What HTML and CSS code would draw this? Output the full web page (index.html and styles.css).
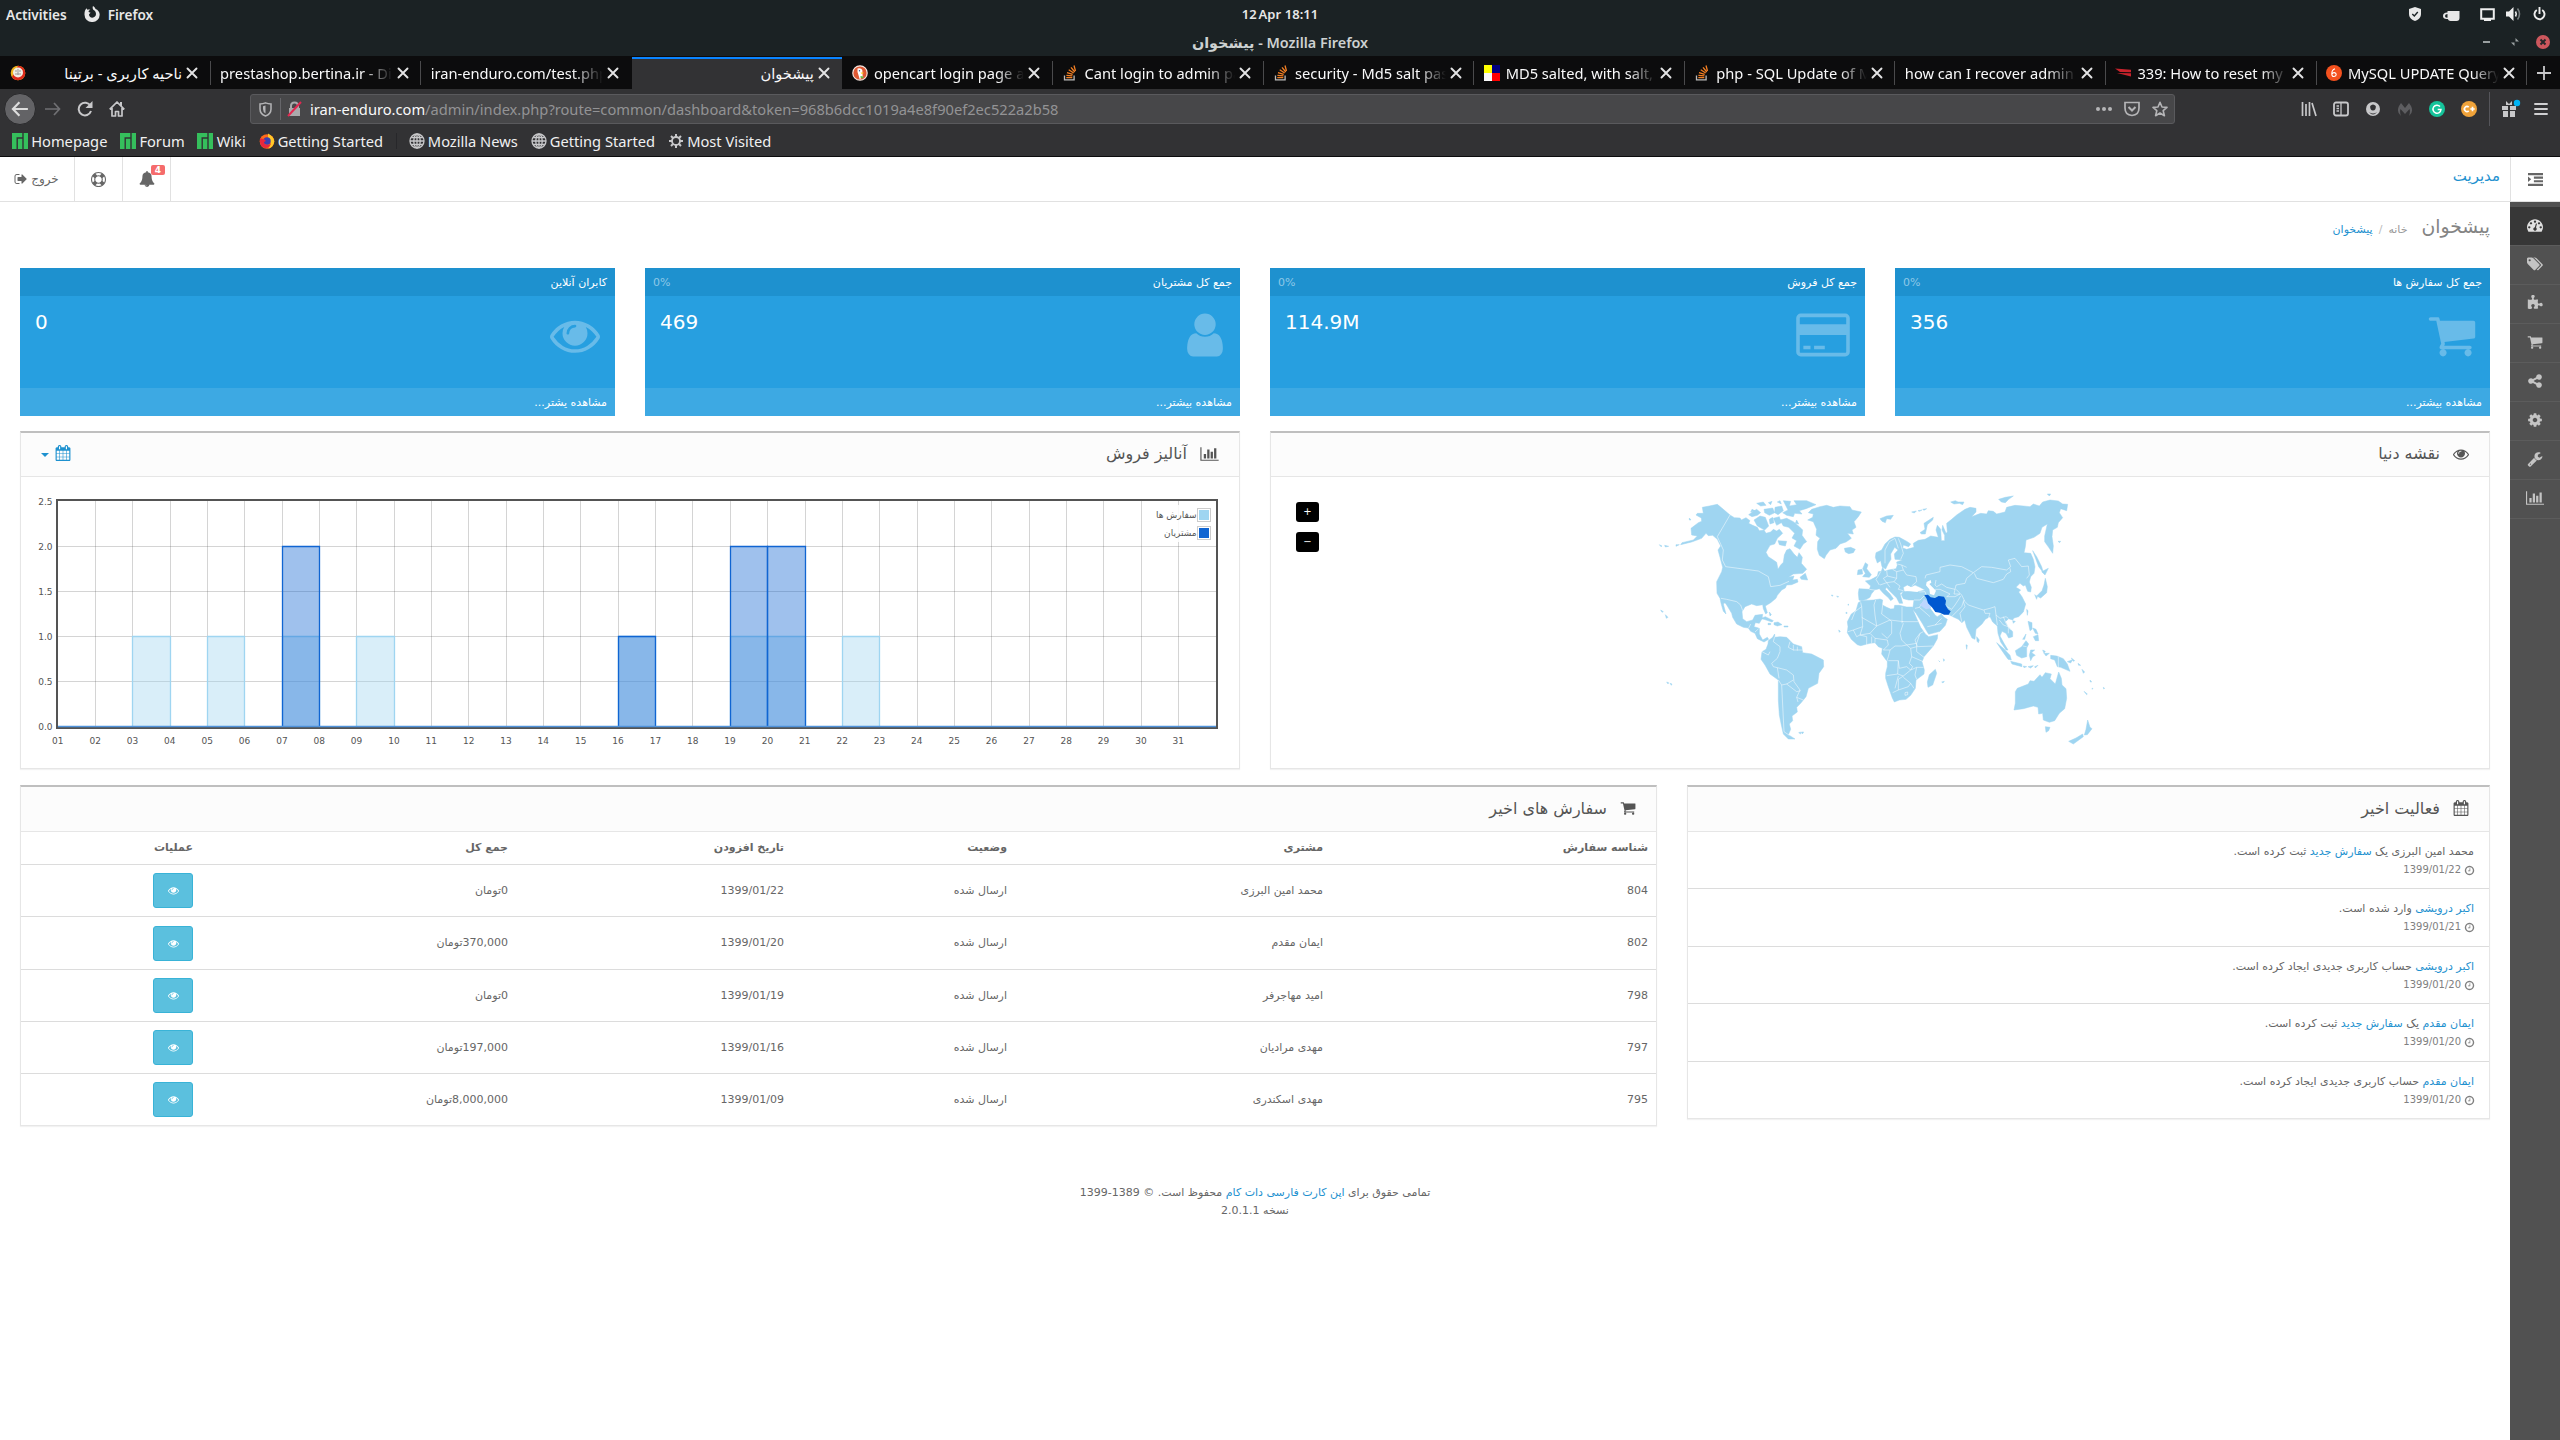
FILE: index.html
```html
<!DOCTYPE html>
<html lang="fa">
<head>
<meta charset="utf-8">
<title>پیشخوان</title>
<link rel="stylesheet" href="styles.css">
</head>
<body>
<svg class="sprite" aria-hidden="true">
  <symbol id="eye" viewBox="0 0 1792 1792"><path d="M1664 960q-152-236-381-353 61 104 61 225 0 185-131.5 316.5t-316.5 131.5-316.5-131.5-131.5-316.5q0-121 61-225-229 117-381 353 133 205 333.5 326.5t434.5 121.5 434.5-121.5 333.5-326.5zm-720-384q0-20-14-34t-34-14q-125 0-214.5 89.5t-89.5 214.5q0 20 14 34t34 14 34-14 14-34q0-86 61-147t147-61q20 0 34-14t14-34zm848 384q0 34-20 69-140 230-376.5 368.5t-499.5 138.5-499.5-139-376.5-368q-20-35-20-69t20-69q140-229 376.5-368t499.5-139 499.5 139 376.5 368q20 35 20 69z"/></symbol>
  <symbol id="cart" viewBox="0 0 1792 1792"><path d="M704 1536q0 52-38 90t-90 38-90-38-38-90 38-90 90-38 90 38 38 90zm896 0q0 52-38 90t-90 38-90-38-38-90 38-90 90-38 90 38 38 90zm128-1088v512q0 24-16.5 42.5t-40.5 21.5l-1044 122q13 60 13 70 0 16-24 64h920q26 0 45 19t19 45-19 45-45 19h-1024q-26 0-45-19t-19-45q0-11 8-31.5t16-36 21.5-40 15.5-29.5l-177-823h-204q-26 0-45-19t-19-45 19-45 45-19h256q16 0 28.5 6.5t19.5 15.5 13 24.5 8 26 5.5 29.5 4.5 26h1201q26 0 45 19t19 45z"/></symbol>
  <symbol id="user" viewBox="0 0 1792 1792"><path d="M1536 1399q0 109-62.5 187t-150.5 78h-854q-88 0-150.5-78t-62.5-187q0-85 8.5-160.5t31.5-152 58.5-131 94-89 134.5-34.5q131 128 313 128t313-128q76 0 134.5 34.5t94 89 58.5 131 31.5 152 8.5 160.5zm-256-887q0 159-112.5 271.5t-271.5 112.5-271.5-112.5-112.5-271.5 112.5-271.5 271.5-112.5 271.5 112.5 112.5 271.5z"/></symbol>
  <symbol id="card" viewBox="0 0 1920 1792"><path d="M1760 128q66 0 113 47t47 113v1216q0 66-47 113t-113 47h-1600q-66 0-113-47t-47-113v-1216q0-66 47-113t113-47h1600zm-1600 128q-13 0-22.5 9.5t-9.5 22.5v224h1664v-224q0-13-9.5-22.5t-22.5-9.5h-1600zm1600 1280q13 0 22.5-9.5t9.5-22.5v-608h-1664v608q0 13 9.5 22.5t22.5 9.5h1600zm-1504-128v-128h256v128h-256zm384 0v-128h384v128h-384z"/></symbol>
  <symbol id="bars" viewBox="0 0 2048 1792"><path d="M640 896v512h-256v-512h256zm384-512v1024h-256v-1024h256zm1024 1152v128h-2048v-1536h128v1408h1920zm-640-896v768h-256v-768h256zm384-384v1152h-256v-1152h256z"/></symbol>
  <symbol id="calendar" viewBox="0 0 1792 1792"><path d="M192 1664h288v-288h-288v288zm352 0h320v-288h-320v288zm-352-352h288v-320h-288v320zm352 0h320v-320h-320v320zm-352-384h288v-288h-288v288zm736 736h320v-288h-320v288zm-384-736h320v-288h-320v288zm768 736h288v-288h-288v288zm-384-352h320v-320h-320v320zm-352-864v-288q0-13-9.5-22.5t-22.5-9.5h-64q-13 0-22.5 9.5t-9.5 22.5v288q0 13 9.5 22.5t22.5 9.5h64q13 0 22.5-9.5t9.5-22.5zm736 864h288v-320h-288v320zm-384-384h320v-288h-320v288zm384 0h288v-288h-288v288zm32-480v-288q0-13-9.5-22.5t-22.5-9.5h-64q-13 0-22.5 9.5t-9.5 22.5v288q0 13 9.5 22.5t22.5 9.5h64q13 0 22.5-9.5t9.5-22.5zm384-64v1280q0 52-38 90t-90 38h-1408q-52 0-90-38t-38-90v-1280q0-52 38-90t90-38h128v-96q0-66 47-113t113-47h64q66 0 113 47t47 113v96h384v-96q0-66 47-113t113-47h64q66 0 113 47t47 113v96h128q52 0 90 38t38 90z"/></symbol>
  <symbol id="clock" viewBox="0 0 1792 1792"><path d="M1024 544v448q0 14-9 23t-23 9h-320q-14 0-23-9t-9-23v-64q0-14 9-23t23-9h224v-352q0-14 9-23t23-9h64q14 0 23 9t9 23zm416 352q0-148-73-273t-198-198-273-73-273 73-198 198-73 273 73 273 198 198 273 73 273-73 198-198 73-273zm224 0q0 209-103 385.5t-279.5 279.5-385.5 103-385.5-103-279.5-279.5-103-385.5 103-385.5 279.5-279.5 385.5-103 385.5 103 279.5 279.5 103 385.5z"/></symbol>
  <symbol id="gauge" viewBox="0 0 1792 1792"><path d="M384 1152q0-53-37.5-90.5t-90.5-37.5-90.5 37.5-37.5 90.5 37.5 90.5 90.5 37.5 90.5-37.5 37.5-90.5zm192-448q0-53-37.5-90.5t-90.5-37.5-90.5 37.5-37.5 90.5 37.5 90.5 90.5 37.5 90.5-37.5 37.5-90.5zm428 481l101-382q6-26-7.5-48.5t-38.5-29.5-48 6.5-30 39.5l-101 382q-60 5-107 43.5t-63 98.5q-20 77 20 146t117 89 146-20 89-117q16-60-6-117t-72-91zm660-33q0-53-37.5-90.5t-90.5-37.5-90.5 37.5-37.5 90.5 37.5 90.5 90.5 37.5 90.5-37.5 37.5-90.5zm-640-640q0-53-37.5-90.5t-90.5-37.5-90.5 37.5-37.5 90.5 37.5 90.5 90.5 37.5 90.5-37.5 37.5-90.5zm448 192q0-53-37.5-90.5t-90.5-37.5-90.5 37.5-37.5 90.5 37.5 90.5 90.5 37.5 90.5-37.5 37.5-90.5zm320 448q0 261-141 483-19 29-54 29h-1402q-35 0-54-29-141-221-141-483 0-182 71-348t191-286 286-191 348-71 348 71 286 191 191 286 71 348z"/></symbol>
  <symbol id="tags" viewBox="0 0 1920 1792"><path d="M448 448q0-53-37.5-90.5t-90.5-37.5-90.5 37.5-37.5 90.5 37.5 90.5 90.5 37.5 90.5-37.5 37.5-90.5zm1067 576q0 53-37 90l-491 492q-39 37-91 37-53 0-90-37l-715-716q-38-37-64.5-101t-26.5-117v-416q0-52 38-90t90-38h416q53 0 117 26.5t102 64.5l715 714q37 39 37 91zm384 0q0 53-37 90l-491 492q-39 37-91 37-36 0-59-14t-53-45l470-470q37-37 37-90 0-52-37-91l-715-714q-38-38-102-64.5t-117-26.5h224q53 0 117 26.5t102 64.5l715 714q37 39 37 91z"/></symbol>
  <symbol id="puzzle" viewBox="0 0 1792 1792"><path d="M1755 1083q0 81-44.5 135t-123.5 54q-41 0-77.5-17.5t-59-38-56.5-38-71-17.5q-110 0-110 124 0 39 16 115t15 115v5q-22 0-33 1-34 3-97.5 11.5t-115.5 13.5-98 5q-61 0-103-26.5t-42-83.5q0-37 17.5-71t38-56.5 38-59 17.5-77.5q0-79-54-123.5t-135-44.5q-84 0-143 45.5t-59 127.5q0 43 15 83t33.5 64.5 33.5 53 15 50.5q0 45-46 89-37 35-117 35-95 0-245-24-9-2-27.5-4t-27.5-4l-13-2q-1 0-3-1-2 0-2-1v-1024q2 1 17.5 3.5t34 5 21.5 3.5q150 24 245 24 80 0 117-35 46-44 46-89 0-22-15-50.5t-33.5-53-33.5-64.5-15-83q0-82 59-127.5t144-45.5q80 0 134 44.5t54 123.5q0 41-17.5 77.5t-38 59-38 56.5-17.5 71q0 57 42 83.5t103 26.5q64 0 180-15t163-17v2q-1 2-3.5 17.5t-5 34-3.5 21.5q-24 150-24 245 0 80 35 117 44 46 89 46 22 0 50.5-15t53-33.5 64.5-33.5 83-15q82 0 127.5 59t45.5 143z"/></symbol>
  <symbol id="share" viewBox="0 0 1792 1792"><path d="M1344 1024q133 0 226.5 93.5t93.5 226.5-93.5 226.5-226.5 93.5-226.5-93.5-93.5-226.5q0-12 2-34l-360-180q-92 86-218 86-133 0-226.5-93.5t-93.5-226.5 93.5-226.5 226.5-93.5q126 0 218 86l360-180q-2-22-2-34 0-133 93.5-226.5t226.5-93.5 226.5 93.5 93.5 226.5-93.5 226.5-226.5 93.5q-126 0-218-86l-360 180q2 22 2 34t-2 34l360 180q92-86 218-86z"/></symbol>
  <symbol id="cog" viewBox="0 0 1792 1792"><path d="M1152 896q0-106-75-181t-181-75-181 75-75 181 75 181 181 75 181-75 75-181zm512-109v222q0 12-8 23t-20 13l-185 28q-19 54-39 91 35 50 107 138 10 12 10 25t-9 23q-27 37-99 108t-94 71q-12 0-26-9l-138-108q-44 23-91 38-16 136-29 186-7 28-36 28h-222q-14 0-24.5-8.5t-11.5-21.5l-28-184q-49-16-90-37l-141 107q-10 9-25 9-14 0-25-11-126-114-165-168-7-10-7-23 0-12 8-23 15-21 51-66.5t54-70.5q-27-50-41-99l-183-27q-13-2-21-12.5t-8-23.5v-222q0-12 8-23t19-13l186-28q14-46 39-92-40-57-107-138-10-12-10-24 0-10 9-23 26-36 98.5-107.5t94.5-71.5q13 0 26 10l138 107q44-23 91-38 16-136 29-186 7-28 36-28h222q14 0 24.5 8.5t11.5 21.5l28 184q49 16 90 37l142-107q9-9 24-9 13 0 25 10 129 119 165 170 7 8 7 22 0 12-8 23-15 21-51 66.5t-54 70.5q26 50 41 98l183 28q13 2 21 12.5t8 23.5z"/></symbol>
  <symbol id="wrench" viewBox="0 0 1792 1792"><path d="M448 1472q0-26-19-45t-45-19-45 19-19 45 19 45 45 19 45-19 19-45zm644-420l-682 682q-37 37-90 37-52 0-91-37l-106-108q-38-36-38-90 0-53 38-91l681-681q39 98 114.5 173.5t173.5 114.5zm634-435q0 39-23 106-47 134-164.5 217.5t-258.5 83.5q-185 0-316.5-131.5t-131.5-316.5 131.5-316.5 316.5-131.5q58 0 121.5 16.5t107.5 46.5q16 11 16 28t-16 28l-293 169v224l193 107q5-3 79-48.5t135.5-81 70.5-35.5q15 0 23.5 10t8.5 25z"/></symbol>
  <symbol id="bell" viewBox="0 0 1792 1792"><path d="M912 1696q0-16-16-16-59 0-101.5-42.5t-42.5-101.5q0-16-16-16t-16 16q0 73 51.5 124.5t124.5 51.5q16 0 16-16zm816-288q0 52-38 90t-90 38h-448q0 106-75 181t-181 75-181-75-75-181h-448q-52 0-90-38t-38-90q50-42 91-88t85-119.5 74.5-158.5 50-206 19.5-260q0-152 117-282.5t307-158.5q-8-19-8-39 0-40 28-68t68-28 68 28 28 68q0 20-8 39 190 28 307 158.5t117 282.5q0 139 19.5 260t50 206 74.5 158.5 85 119.5 91 88z"/></symbol>
  <symbol id="signout" viewBox="0 0 1664 1792"><path d="M704 1440q0 4 1 20t.5 26.5-3 23.5-10 19.5-20.5 6.5h-320q-119 0-203.5-84.5t-84.5-203.5v-704q0-119 84.5-203.5t203.5-84.5h320q13 0 22.5 9.5t9.5 22.5q0 4 1 20t.5 26.5-3 23.5-10 19.5-20.5 6.5h-320q-66 0-113 47t-47 113v704q0 66 47 113t113 47h312l11.5 1 11.5 3 8 5.5 7 9 2 13.5zm928-544q0 26-19 45l-544 544q-19 19-45 19t-45-19-19-45v-288h-448q-26 0-45-19t-19-45v-384q0-26 19-45t45-19h448v-288q0-26 19-45t45-19 45 19l544 544q19 19 19 45z"/></symbol>
  <symbol id="ring" viewBox="0 0 1792 1792"><path d="M896 0q182 0 348 71t286 191 191 286 71 348-71 348-191 286-286 191-348 71-348-71-286-191-191-286-71-348 71-348 191-286 286-191 348-71zm0 128q-190 0-361 90l194 194q82-28 167-28t167 28l194-194q-171-90-361-90zm-678 1129l194-194q-28-82-28-167t28-167l-194-194q-90 171-90 361t90 361zm678 407q190 0 361-90l-194-194q-82 28-167 28t-167-28l-194 194q171 90 361 90zm0-384q159 0 271.5-112.5t112.5-271.5-112.5-271.5-271.5-112.5-271.5 112.5-112.5 271.5 112.5 271.5 271.5 112.5zm484-217l194 194q90-171 90-361t-90-361l-194 194q28 82 28 167t-28 167z"/></symbol>
  <symbol id="indent" viewBox="0 0 14 14"><path d="M0 1h14v2H0zM5.500 4.200h8.500v2H5.500zM5.500 7.600h8.500v2H5.500zM0 11h14v2H0zM0 4.200l3 2.600-3 2.600z"/></symbol>
  <symbol id="close" viewBox="0 0 16 16"><path d="M3.500 3.500l9 9M12.500 3.500l-9 9" fill="none" stroke="currentColor" stroke-width="1.900" stroke-linecap="round"/></symbol>
  <symbol id="globe" viewBox="0 0 16 16"><g fill="none" stroke="currentColor" stroke-width="1.300"><circle cx="8" cy="8" r="7"/><ellipse cx="8" cy="8" rx="3.200" ry="7"/><path d="M8 1v14M1 8h14M2.200 4.500h11.600M2.200 11.500h11.600"/></g></symbol>
  <symbol id="manjaro" viewBox="0 0 16 16"><path fill="#35bf5c" d="M0 0h10.300v4.300H4.500V16H0zM5.900 5.800h4.400V16H5.900zM11.700 0H16v16h-4.300z"/></symbol>
  <symbol id="stack" viewBox="0 0 16 16"><path d="M2.500 10.500v4.300h9.600v-4.300" fill="none" stroke="#bcbbbb" stroke-width="1.300"/><path d="M4.300 12.700h6M4.400 10.300l6 .6M5 7.600l5.700 1.800M6.700 4.800l5 3.200M9 2.300l3.800 4.700M12 .5l1.500 5.500" stroke="#f48024" stroke-width="1.300" fill="none"/></symbol>
</svg>

<div class="gnome" lang="en">
  <div class="gnome-left"><span>Activities</span>
    <svg width="16" height="16" viewBox="0 0 16 16"><path fill="#e8e8e8" d="M9 0c1.500 1 2.300 2 2.500 3 2.500.800 4.200 3 4.200 5.800A7.300 7.300 0 0 1 8 16 7.300 7.300 0 0 1 .500 8.800C.400 6 1 4 2.500 2.300l.800 1.500c1-.5 2-.4 3 0-1.300.5-1.800 1.300-1.700 2.200l2 .7-1.600 1.600c0 2 1.500 3.400 3.300 3.400 2.200 0 3.700-1.600 3.700-3.600C12 6 11 4.500 9.300 3.700 8.500 2.500 8.500 1.200 9 0z"/></svg>
    <span>Firefox</span></div>
  <div class="gnome-clock">12 Apr&nbsp; 18:11</div>
  <div class="tray">
    <svg width="12" height="14" viewBox="0 0 12 14"><path fill="#e8e8e8" d="M6 0l6 2v5c0 3.500-2.800 6-6 7C2.800 13 0 10.500 0 7V2z"/><path d="M3.300 7l2 2 3.500-4" fill="none" stroke="#1b2224" stroke-width="1.400"/></svg>
    <svg class="cup" width="17" height="12" viewBox="0 0 17 12"><path fill="#e8e8e8" d="M4.500 1h12v7q0 3-3 3h-6q-2 0-2.700-2Q0 9.500 0 6q0-3.600 4.500-3.500zM4.500 4Q2 4 2 6t2.500 1.700z"/></svg>
    <svg class="screen" width="15" height="13" viewBox="0 0 15 13"><path d="M1.200 1.200h12.600v9.600h-12.600z" fill="none" stroke="#eee" stroke-width="2"/><path fill="#eee" d="M4 10h7v3H4z"/></svg>
    <svg class="vol" width="16" height="14" viewBox="0 0 16 14"><path fill="#eee" d="M0 4.500h3L7.500 0v14L3 9.500H0z"/><path d="M9.500 4.500q1.500 2.500 0 5" fill="none" stroke="#eee" stroke-width="1.600"/><path d="M11.500 1.500q4 5.500 0 11" fill="none" stroke="#777d7f" stroke-width="1.600"/></svg>
    <svg class="power" width="13" height="14" viewBox="0 0 13 14"><path d="M3.800 3a5 5 0 1 0 5.400 0M6.500 0v7" fill="none" stroke="#eee" stroke-width="1.900"/></svg>
  </div>
</div>
<div class="titlebar"><span></span><b><bdi>پیشخوان</bdi> - Mozilla Firefox</b>
  <div class="winctl">
    <svg width="7" height="3"><path fill="#9aa0a1" d="M0 0h7v2H0z"/></svg>
    <svg width="8" height="8" viewBox="0 0 8 8"><path fill="#9aa0a1" d="M4.500 0v3.500H8zM3.500 8V4.500H0z"/></svg>
    <svg width="14" height="14" viewBox="0 0 14 14"><circle cx="7" cy="7" r="7" fill="#cc575d"/><path d="M4.500 4.500l5 5M9.500 4.500l-5 5" stroke="#26282b" stroke-width="2"/></svg>
  </div>
</div>

<div class="tabs">
  <div class="tab"><svg class="fav" width="16" height="16" viewBox="0 0 16 16"><circle cx="8" cy="8" r="7.300" fill="#f0b41c"/><path d="M8 .7A7.300 7.300 0 0 1 8 15.300 7.300 7.300 0 0 1 2 12z" fill="#dd2a1b"/><circle cx="8" cy="7.500" r="5" fill="#f1eee4"/><path d="M5 6h2M9 6h2M5 9h6M8 4v6" stroke="#999"/></svg><span class="t fa" dir="rtl">ناحیه کاربری - برتینا</span><svg class="x"><use href="#close"/></svg></div>
  <div class="tab"><span class="t">prestashop.bertina.ir - Di</span><svg class="x"><use href="#close"/></svg></div>
  <div class="tab"><span class="t">iran-enduro.com/test.php</span><svg class="x"><use href="#close"/></svg></div>
  <div class="tab active"><span class="t fa" dir="rtl">پیشخوان</span><svg class="x"><use href="#close"/></svg></div>
  <div class="tab"><svg class="fav" width="16" height="16" viewBox="0 0 16 16"><circle cx="8" cy="8" r="7.200" fill="#de5833" stroke="#f5e6e0" stroke-width="1.200"/><path d="M5.500 3.500Q9 2.500 10.300 5l.4 7-3 2.200Q6.500 10 5.500 7z" fill="#fff"/><path d="M8.500 7.500l3.800.3-2.500 1.300z" fill="#fdd20a"/><path d="M8.500 11l3 .5-.5 2-2.500-.8z" fill="#65bc46"/><circle cx="7.500" cy="5.800" r=".7" fill="#2d4f8e"/></svg><span class="t">opencart login page ad</span><svg class="x"><use href="#close"/></svg></div>
  <div class="tab"><svg class="fav"><use href="#stack"/></svg><span class="t">Cant login to admin pa</span><svg class="x"><use href="#close"/></svg></div>
  <div class="tab"><svg class="fav"><use href="#stack"/></svg><span class="t">security - Md5 salt pass</span><svg class="x"><use href="#close"/></svg></div>
  <div class="tab"><svg class="fav" width="16" height="16" viewBox="0 0 16 16"><path fill="#ff0" d="M0 0h8v8H0z"/><path fill="#00007f" d="M8 0h8v8H8z"/><path d="M0 8h8v8H0z"/><path fill="red" d="M8 8h8v8H8z"/></svg><span class="t">MD5 salted, with salt,</span><svg class="x"><use href="#close"/></svg></div>
  <div class="tab"><svg class="fav"><use href="#stack"/></svg><span class="t">php - SQL Update of M</span><svg class="x"><use href="#close"/></svg></div>
  <div class="tab"><span class="t">how can I recover admin</span><svg class="x"><use href="#close"/></svg></div>
  <div class="tab"><svg class="fav" width="16" height="16" viewBox="0 0 16 16"><path fill="#c8232c" d="M0 3.500l16 1.300v2.400L5 7zM2 8l14 .300v3.200z"/></svg><span class="t">339: How to reset my</span><svg class="x"><use href="#close"/></svg></div>
  <div class="tab"><svg class="fav" width="16" height="16" viewBox="0 0 16 16"><circle cx="8" cy="8" r="8" fill="#f4511e"/><path d="M9 3.800Q5.800 5 5.800 8.400T8 11.500t2.200-2T8.300 7.600 6.800 9" fill="none" stroke="#fff" stroke-width="1.100"/></svg><span class="t">MySQL UPDATE Query</span><svg class="x"><use href="#close"/></svg></div>
  <svg class="plus" width="16" height="16" viewBox="0 0 16 16"><path d="M8 1v14M1 8h14" stroke="#c8c8ca" stroke-width="1.800"/></svg>
</div>

<div class="nav">
  <span class="back"><svg width="18" height="18" viewBox="0 0 16 16"><path d="M15 8H2M7.500 2L1.700 8l5.800 6" fill="none" stroke="#ddd" stroke-width="1.900"/></svg></span>
  <svg class="fwd" width="16" height="16" viewBox="0 0 16 16"><path d="M0 8h14M9 2l5.500 6L9 14" fill="none" stroke="#707073" stroke-width="1.700"/></svg>
  <svg class="reload" width="16" height="16" viewBox="0 0 16 16"><path d="M13.500 5A6.300 6.300 0 1 0 14 10" fill="none" stroke="#c8c8ca" stroke-width="2"/><path fill="#c8c8ca" d="M15.500 0v7h-7z"/></svg>
  <svg class="home" width="16" height="16" viewBox="0 0 16 16"><path d="M.7 8.300L8 1l7.300 7.300M3 7v8h3.500v-4.500h3V15H13V7" fill="none" stroke="#c8c8ca" stroke-width="1.700" stroke-linejoin="round"/><path fill="#c8c8ca" d="M11 1h2v4h-2z"/></svg>
  <div class="url">
    <svg width="13" height="15" viewBox="0 0 13 15"><path d="M6.500.900Q9 2 12 2v5q0 5-5.500 7Q1 12 1 7V2q3 0 5.500-1.100z" fill="none" stroke="#b5b5b7" stroke-width="1.500"/><path fill="#b5b5b7" d="M6.500 3.500v8Q4 10 4 7V4.200z"/></svg>
    <i></i>
    <svg width="15" height="16" viewBox="0 0 15 16"><path fill="#a9a9ab" d="M2 7h11v8H2z"/><path d="M4 8V5q0-3.500 3.500-3.500T11 5v3" fill="none" stroke="#a9a9ab" stroke-width="2"/><path d="M1 15L14 1" stroke="#e22850" stroke-width="2"/></svg>
    <span class="addr"><b>iran-enduro.com</b>/admin/index.php?route=common/dashboard&amp;token=968b6dcc1019a4e8f90ef2ec522a2b58</span>
    <svg width="16" height="16" viewBox="0 0 16 16"><g fill="#b5b5b7"><circle cx="2" cy="8" r="2"/><circle cx="8" cy="8" r="2"/><circle cx="14" cy="8" r="2"/></g></svg>
    <svg width="16" height="16" viewBox="0 0 16 16"><path d="M1 1.500h14V7q0 7-7 7.500Q1 14 1 7z" fill="none" stroke="#b5b5b7" stroke-width="1.700"/><path d="M4.500 6L8 9.500 11.500 6" fill="none" stroke="#b5b5b7" stroke-width="2"/></svg>
    <svg width="16" height="16" viewBox="0 0 16 16"><path d="M8 1.300l2 4.700 5 .4-3.800 3.300 1.200 5L8 12l-4.400 2.700 1.200-5L1 6.400 6 6z" fill="none" stroke="#b5b5b7" stroke-width="1.600" stroke-linejoin="round"/></svg>
  </div>
  <div class="ext">
    <svg width="16" height="16" viewBox="0 0 16 16"><path d="M1.500 1v14M5 3v12M8.500 1v14M11 2l4 13" stroke="#c8c8ca" stroke-width="1.700"/></svg>
    <svg width="16" height="16" viewBox="0 0 16 16"><rect x="1" y="1.500" width="14" height="13" rx="2" fill="none" stroke="#c8c8ca" stroke-width="1.800"/><path d="M8 2v12M3.500 5h2.500M3.500 7.500h2.500M3.500 10h2.500" stroke="#c8c8ca" stroke-width="1.300"/></svg>
    <svg width="16" height="16" viewBox="0 0 16 16"><circle cx="8" cy="8" r="7" fill="#c8c8ca"/><path d="M5.200 5Q8 2 10.800 5q.4 4.200-2.800 4.600Q4.800 9.200 5.200 5zM4 11q4 3 8 0-4 5-8 0z" fill="#323234"/></svg>
    <svg width="16" height="16" viewBox="0 0 16 16"><path fill="#5d5d60" d="M4 15Q-1 11 2 5l2-3 4 5 4-5 2 3q3 6-2 10 1.500-4 .5-7L8 13 3.500 8q-1 3 .5 7z"/></svg>
    <svg width="16" height="16" viewBox="0 0 16 16"><circle cx="8" cy="8" r="8" fill="#15c39a"/><path d="M11 5.500A4 4 0 1 0 12 8.500H8.700" fill="none" stroke="#fff" stroke-width="1.500"/></svg>
    <svg width="16" height="16" viewBox="0 0 16 16"><circle cx="8" cy="8" r="8" fill="#f0a33a"/><path d="M7.700 6.200a2.500 2.500 0 1 0 0 3.600M9.300 8h4.400M11.500 5.800v4.400" fill="none" stroke="#fff" stroke-width="1.700"/></svg>
    <i></i>
    <svg class="gift" width="20" height="20" viewBox="0 0 20 20"><path fill="#c8c8ca" d="M0 7h6v4H0zM8 7h6v4H8zM1 12h5v6H1zM8 12h5v6H8zM4 2l3 3 3-3v4H4z"/><circle cx="15" cy="4" r="3.200" fill="#00b3f4"/></svg>
    <svg class="menu" width="14" height="16" viewBox="0 0 14 16"><path d="M1 3h12M1 8h12M1 13h12" stroke="#d0d0d2" stroke-width="1.900" stroke-linecap="round"/></svg>
  </div>
</div>

<div class="bookmarks">
  <span><svg><use href="#manjaro"/></svg>Homepage</span>
  <span><svg><use href="#manjaro"/></svg>Forum</span>
  <span><svg><use href="#manjaro"/></svg>Wiki</span>
  <span><svg viewBox="0 0 16 16"><circle cx="8" cy="8.500" r="7.300" fill="#ff6a1a"/><path d="M9 .5q6 3 6.300 8-1 6-6 7.300Q14 9 9 5z" fill="#ffc928"/><circle cx="8" cy="8" r="3.700" fill="#3b3fae"/><path d="M1 5q2 1 4 1l2 2-2 1q0 3 4 3 2 0 3-2-1 5-6 5Q0 14 1 5z" fill="#e8283c"/></svg>Getting Started</span>
  <i></i>
  <span><svg><use href="#globe"/></svg>Mozilla News</span>
  <span><svg><use href="#globe"/></svg>Getting Started</span>
  <span><svg viewBox="0 0 16 16"><g fill="none" stroke="#c8c8ca"><circle cx="8" cy="8" r="4" stroke-width="1.800"/><path stroke-width="2" d="M8 1v3M8 12v3M1 8h3M12 8h3M3 3l2.200 2.200M10.800 10.800L13 13M13 3l-2.200 2.200M5.200 10.800L3 13"/></g></svg>Most Visited</span>
</div>

<div class="page" dir="rtl">
  <header>
    <a class="toggle"><svg width="15" height="15"><use href="#indent"/></svg></a>
    <a class="brand">مدیریت</a>
    <a class="hbtn"><svg width="16" height="16"><use href="#bell"/></svg><em>4</em></a>
    <a class="hbtn"><svg width="15" height="15"><use href="#ring"/></svg></a>
    <a class="hbtn out">خروج <svg width="13" height="14"><use href="#signout"/></svg></a>
  </header>
  <div class="cols">
    <aside>
      <a class="on"><svg><use href="#gauge"/></svg></a>
      <a><svg><use href="#tags"/></svg></a>
      <a><svg><use href="#puzzle"/></svg></a>
      <a><svg><use href="#cart"/></svg></a>
      <a><svg><use href="#share"/></svg></a>
      <a><svg><use href="#cog"/></svg></a>
      <a><svg><use href="#wrench"/></svg></a>
      <a><svg class="wide"><use href="#bars"/></svg></a>
    </aside>
    <main>
      <div class="crumb"><h1>پیشخوان</h1><span>خانه</span><i>/</i><a>پیشخوان</a></div>
      <div class="tiles">
        <div class="tile"><div class="th"><span>جمع کل سفارش ها</span><span class="pct" dir="ltr">0%</span></div><div class="tb crt"><svg width="50" height="50"><use href="#cart"/></svg><b>356</b></div><div class="tf">مشاهده بیشتر...</div></div>
        <div class="tile"><div class="th"><span>جمع کل فروش</span><span class="pct" dir="ltr">0%</span></div><div class="tb"><svg width="54" height="50"><use href="#card"/></svg><b dir="ltr">114.9M</b></div><div class="tf">مشاهده بیشتر...</div></div>
        <div class="tile"><div class="th"><span>جمع کل مشتریان</span><span class="pct" dir="ltr">0%</span></div><div class="tb usr"><svg width="50" height="50"><use href="#user"/></svg><b>469</b></div><div class="tf">مشاهده بیشتر...</div></div>
        <div class="tile"><div class="th"><span>کابران آنلاین</span></div><div class="tb"><svg width="50" height="50"><use href="#eye"/></svg><b>0</b></div><div class="tf">مشاهده یشتر...</div></div>
      </div>
      <div class="row two">
        <section class="panel">
          <h3><svg width="16" height="16"><use href="#eye"/></svg>نقشه دنیا</h3>
          <div class="map">
            <div class="zoom"><b>+</b><b>−</b></div>
            <svg class="world" width="480" height="270" viewBox="0 30 1440 810">
              <g class="land">
                <path d="M187 112L208 108 232 103 250 118 270 135 283 143 300 144 304 150 318 143 330 152 326 160 338 166 352 172 358 182 372 180 378 190 392 186 400 178 410 183 418 178 428 190 412 205 404 222 390 226 378 247 385 260 400 270 410 277 414 298 422 285 430 277 433 255 440 240 450 236 462 252 472 262 477 248 487 262 484 280 500 298 488 310 460 312 445 322 462 318 458 330 472 328 474 336 455 344 440 345 436 354 425 360 412 376 408 385 392 398 376 408 382 428 377 432 370 416 368 404 350 407 335 402 315 410 306 425 308 446 320 455 338 450 345 436 368 433 366 446 358 460 346 458 342 470 358 475 358 492 368 510 382 502 386 508 372 516 352 506 345 490 332 484 325 474 310 472 290 462 278 442 275 430 262 408 255 398 250 402 258 432 250 424 243 400 240 385 231 370 230 335 245 305 248 292 240 262 234 240 242 228 232 208 218 196 205 197 198 190 185 205 155 216 122 224 126 218 160 210 172 198 155 195 153 175 175 158 185 154 184 144 168 135 172 130 190 130z"/>
                <path d="M338 125L350 118 362 128 352 136 336 140 326 134zM342 150L360 138 376 142 386 168 374 180 352 168zM350 100L370 96 378 106 362 108zM372 118L398 114 404 128 388 136 374 128zM385 98L396 94 392 104zM405 112L425 108 430 122 414 134 404 128zM412 96L420 92 424 102zM388 148L398 142 402 158 390 162zM400 145L418 140 424 158 410 166zM420 150L440 145 460 155 478 170 488 180 486 196 500 215 490 222 480 238 462 228 470 212 456 204 464 190 446 172 430 168zM414 212L440 214 436 228 418 224zM430 92L452 94 448 108 470 104 462 92 500 92 528 104 498 116 478 122 486 132 464 130 460 140 440 136 428 128 444 120zM470 150L476 162 466 160zM336 118L345 122 332 126zM480 322L496 310 503 330 484 328z"/>
                <path d="M505 128L515 118 540 110 560 106 580 112 600 108 630 110 636 120 664 126 655 140 642 155 648 172 636 180 640 192 622 190 634 205 618 216 600 222 588 235 570 240 558 256 553 266 538 256 532 238 533 215 540 205 528 196 530 178 520 155 503 150 518 142 520 132z"/>
                <path d="M613 235L632 232 646 238 640 248 626 251 616 246zM360 446L376 440 400 452 396 456 372 448zM402 458L414 456 426 464 412 468 402 464zM432 468h12v3h-12zM384 460h8v4h-8zM388 426l6 8-4 4zM62 420l8 5-4 2zM76 434l8 8-5 3zM80 636l6 2-2 4zM90 640l6 2-2 4zM58 224l8 4-3 2zM74 226l12 3-10 2zM108 224l10 0-10 5zM148 144l5 6-5 0z"/>
                <path d="M385 512L398 502 404 492 404 502 420 500 440 502 452 514 460 522 485 530 488 548 515 552 550 570 551 590 537 610 533 640 505 655 498 680 482 700 470 712 472 726 456 738 458 752 448 762 452 778 445 794 465 807 445 807 430 792 424 765 418 735 415 690 415 630 390 612 375 585 363 568 366 545 378 538 384 522zM476 788l6-2 0 6zM484 786l7 0-4 6z"/>
                <path d="M655 398L665 392 700 390 720 387 728 390 726 404 740 412 752 417 762 416 764 406 778 406 800 411 818 411 820 422 832 450 842 472 856 492 866 500 893 494 892 506 880 528 852 560 846 575 853 600 852 612 828 630 826 655 812 676 798 688 778 690 763 696 757 684 745 650 737 625 737 610 742 590 742 575 725 552 727 535 715 530 705 518 690 520 662 527 652 524 634 508 622 488 624 470 622 455 634 432 648 422z"/>
                <path d="M886 598L890 610 878 645 864 652 862 636 868 614zM905 636l8-2-4 5zM910 566l4 4-3 4zM896 572l4 4zM978 524l4 2-2 12zM624 402l3 2-3 2zM596 480l5 4-3 3zM574 375l5 1-2 3zM590 378l6 2-3 2zM618 426l4 3-4 2z"/>
                <path d="M657 390L655 370 657 356 688 358 692 348 676 333 690 330 700 325 712 318 715 305 724 304 728 292 734 304 745 300 768 296 772 286 770 276 788 270 765 268 763 252 774 240 764 232 752 252 753 268 744 282 737 297 726 290 722 272 712 279 706 262 708 248 725 240 735 222 750 208 765 201 778 202 802 215 812 222 806 230 790 225 788 234 800 238 822 232 820 220 835 211 855 208 872 198 895 202 888 180 892 166 902 178 904 212 914 212 914 196 906 180 908 166 918 190 922 186 920 160 935 148 950 135 975 118 990 112 1008 115 1008 126 995 140 1022 130 1040 132 1045 122 1060 124 1070 132 1095 126 1100 112 1125 106 1150 108 1170 110 1180 102 1198 108 1208 96 1230 90 1255 93 1268 102 1283 103 1280 122 1262 116 1258 128 1268 143 1255 158 1252 172 1238 180 1236 200 1240 228 1238 250 1226 232 1214 215 1214 198 1222 162 1206 172 1200 190 1182 202 1158 210 1156 230 1152 248 1172 250 1180 268 1185 290 1182 310 1172 320 1168 336 1174 352 1172 366 1163 364 1156 345 1150 348 1140 340 1128 352 1142 360 1136 366 1146 380 1157 402 1150 426 1136 440 1122 444 1118 450 1106 446 1096 455 1104 470 1118 485 1118 500 1106 504 1098 490 1086 484 1080 498 1092 520 1104 540 1098 540 1082 516 1074 490 1072 468 1058 456 1050 440 1036 448 1026 462 1008 478 1005 508 996 504 980 472 974 450 966 458 955 448 942 442 924 433 900 428 884 416 872 408 868 412 886 436 892 440 904 432 912 442 922 448 916 466 900 484 866 493 858 480 848 462 828 430 818 418 822 390 806 390 790 386 784 374 790 364 800 364 830 366 855 360 840 352 825 345 812 352 802 345 790 352 792 362 780 370 788 400 778 400 770 384 758 372 748 362 740 352 736 358 750 372 760 386 752 392 746 384 730 370 718 356 704 360 694 372 690 382 680 388 664 392z"/>
                <path d="M676 278L684 284 680 296 694 314 688 322 668 320 676 310 668 296zM654 300L666 298 668 312 652 314zM720 146L740 138 760 136 752 148 740 146 736 158 726 154zM815 126l14-3-6 6zM834 122l12-2-8 4zM848 118l12-2-8 5zM840 188L855 178 852 160 880 142 878 150 862 164 856 192 845 192zM932 96l14-4 8 4 18 0-4 8-10-4-16 2zM1076 88l20-6 24-4-14 10-10 10-12-2zM1222 72l10 0-4 6zM1205 305L1225 295 1215 315zM1178 242L1190 260 1205 290 1210 308 1196 290zM1216 325L1222 350 1220 368 1202 384 1190 378 1206 362 1212 345zM1184 374l8 6-2 8zM1160 418l4 4-2 14zM1118 452l8 2-6 6zM1010 500L1018 510 1015 518 1011 514zM1254 214l8 0-3 4z"/>
                <path d="M1070 518L1090 535 1110 556 1114 570 1104 568 1088 545zM1112 574L1145 582 1146 590 1116 582zM1150 588l10 2-8 3zM1164 590l16-3-8 7zM1184 590l10-4-8 8zM1126 542L1145 530 1158 512 1166 522 1160 534 1160 560 1145 564 1130 556zM1172 540L1184 540 1175 548 1186 556 1178 560 1172 572 1168 556zM1164 454L1176 458 1176 478 1170 482zM1178 474l10 4 6 14-8-2zM1180 500L1194 494 1196 512 1186 512zM1148 508l10-16-4 16zM1208 540l8 4-4 6zM1212 550l16 0-10 8zM1232 556L1250 558 1270 566 1282 582 1290 604 1276 598 1262 592 1252 590 1244 570 1232 566zM1282 575l16-6-6 10zM1294 564l10 8-4 2zM1314 580l8 6-6 0zM1326 598l8 8-4 4zM1350 630l5 6-4 0zM1356 654l3 2-2 2zM1390 652l4 3-3 2zM1332 664l10 8-2 2z"/>
                <path d="M1126 665L1132 655 1165 642 1170 632 1182 634 1200 614 1206 622 1216 608 1234 612 1230 626 1246 642 1256 606 1264 625 1266 645 1278 656 1280 685 1274 716 1258 730 1244 752 1228 757 1210 750 1208 730 1196 732 1194 712 1180 708 1150 716 1122 720 1126 700zM1216 770L1230 772 1226 782 1218 787zM1343 750L1350 772 1356 776 1342 794 1333 795 1338 778zM1328 792L1330 800 1300 822 1286 814 1308 804z"/>
              </g>
              <path class="sea" d="M796 353L806 348 814 352 826 348 838 358 834 365 806 362 796 364zM860 336L872 330 874 338 868 342 888 362 882 376 870 372 868 358 858 346z"/>
              <path class="lines" d="M270 135L232 200 250 240 247 270 257 290M257 290L355 303 385 320 392 350 420 346 447 334M243 385L260 388 290 395 302 405 308 422M326 474L332 462M345 486L356 476M404 500L400 515 420 530 420 545 412 565 395 580 400 590 412 593 440 600 460 615 462 635 480 660 470 682 490 690M366 545L385 555 390 545M415 630L425 645 432 785 448 796M425 645L440 642 460 630M440 642L470 665 482 662M450 515L445 532 460 540 488 540M460 525v16M472 530v12M412 593L417 625M470 682L474 696M688 358L715 362M722 305L715 318 708 328 718 345M740 302L742 318 730 325 740 338 720 345M742 318L770 325 770 305 758 298M770 325L762 335 740 338 750 352M762 335L780 348 775 358 790 362M770 305L790 300 800 315 828 320 830 335 815 348M790 300L785 285 772 282M785 285L800 292M735 280L735 240 748 215 765 205 775 235M775 205L782 222 790 250 782 268M855 325L858 315 900 305 900 292 930 285 965 290 1000 308 980 325 975 340 948 345 945 358 920 352 905 342 890 350 885 345 888 330M1000 308L1025 290 1055 292 1100 300 1112 290 1105 270 1125 265 1145 290 1165 288 1168 315 1160 325M1003 310L1010 325 1060 338 1090 328 1100 312 1112 305 1110 295M948 358L965 375 975 395 985 405 1030 420 1050 415 1065 410 1068 435 1080 445 1098 440 1105 445M945 358L942 372 960 372M885 358L900 358 930 372 920 380 945 380 960 372M918 408L935 418 945 405 955 390 962 378M935 440L950 425 965 410 972 390M965 455L960 430 975 410 970 395M1032 420L1035 430 1050 430 1045 445M1068 435L1072 465M1078 450L1090 465 1105 470 1105 490M1090 440L1098 460 1112 480M822 390L840 390 852 378M825 415L838 412 850 395M838 412L870 440M862 470L885 465 905 460M885 465L905 445M838 366L855 365 860 380M662 397L665 410 645 425 635 450M665 410L668 470 640 480 624 485M665 442L710 468 750 450 755 455M707 390L702 405 705 435 710 468M728 405L725 432 750 450M786 410V460M786 455H835M750 450L790 455M755 455V490L742 505 725 490M790 460L780 490 785 510 800 525 830 520 840 490 850 485M840 490L825 510 832 530 880 528M710 468L690 490 705 505 742 510 745 525M668 470L660 495 690 490M640 480L650 500 660 495 680 500 680 525M695 500V520M705 505L705 518M745 525L730 540H750L745 560 740 575M750 540L765 528 785 528 800 525 812 535 815 560 808 580 818 590 812 600 800 590 778 595 775 572 745 572M815 560L850 575M830 520L830 545 852 562M812 535L830 530M775 572L773 612 740 617M773 612L790 618 812 600M790 618L775 628V660L758 668M775 618L765 655M790 622L812 640 805 650 775 660M812 600L830 592 850 592M830 592L825 615 830 628M812 640L822 655M795 668L803 666 803 674 795 676zM1255 560V592M1148 528L1160 530"/>
              <path fill="#bcd6ff" d="M852 386L864 396 874 414 858 418 838 404 846 398z"/>
              <path fill="#0058d0" d="M853 375L864 374 872 382 885 384 896 378 912 380 918 392 916 404 924 418 932 424 926 434 912 434 900 428 886 426 876 412 864 400 860 386z"/>
            </svg>
          </div>
        </section>
        <section class="panel">
          <h3><svg width="19" height="16"><use href="#bars"/></svg>آنالیز فروش<span class="cal"><svg width="16" height="16"><use href="#calendar"/></svg><svg class="caret" width="8" height="4"><path d="M0 0h8L4 4z"/></svg></span></h3>
          <div class="chartbox" dir="ltr"><svg class="chart" width="1218" height="291" viewBox="21 477 1218 291"></svg></div>
        </section>
      </div>
      <div class="row bottom">
        <section class="panel">
          <h3><svg width="16" height="16"><use href="#calendar"/></svg>فعالیت اخیر</h3>
          <ul>
            <li>محمد امین البرزی یک <a>سفارش جدید</a> ثبت کرده است.<br><small><svg width="11" height="11"><use href="#clock"/></svg>1399/01/22</small></li>
            <li><a>اکبر درویشی</a> وارد شده است.<br><small><svg width="11" height="11"><use href="#clock"/></svg>1399/01/21</small></li>
            <li><a>اکبر درویشی</a> حساب کاربری جدیدی ایجاد کرده است.<br><small><svg width="11" height="11"><use href="#clock"/></svg>1399/01/20</small></li>
            <li><a>ایمان مقدم</a> یک <a>سفارش جدید</a> ثبت کرده است.<br><small><svg width="11" height="11"><use href="#clock"/></svg>1399/01/20</small></li>
            <li><a>ایمان مقدم</a> حساب کاربری جدیدی ایجاد کرده است.<br><small><svg width="11" height="11"><use href="#clock"/></svg>1399/01/20</small></li>
          </ul>
        </section>
        <section class="panel">
          <h3><svg width="16" height="16"><use href="#cart"/></svg>سفارش های اخیر</h3>
          <table>
            <colgroup><col class="c1"><col class="c2"><col class="c3"><col class="c4"><col class="c5"><col class="c6"></colgroup>
            <tr><th>شناسه سفارش</th><th>مشتری</th><th>وضعیت</th><th>تاریخ افزودن</th><th>جمع کل</th><th>عملیات</th></tr>
            <tr><td>804</td><td>محمد امین البرزی</td><td>ارسال شده</td><td>1399/01/22</td><td>0تومان</td><td><a class="btn"><svg width="11" height="11"><use href="#eye"/></svg></a></td></tr>
            <tr><td>802</td><td>ایمان مقدم</td><td>ارسال شده</td><td>1399/01/20</td><td>370,000تومان</td><td><a class="btn"><svg width="11" height="11"><use href="#eye"/></svg></a></td></tr>
            <tr><td>798</td><td>امید مهاجرفر</td><td>ارسال شده</td><td>1399/01/19</td><td>0تومان</td><td><a class="btn"><svg width="11" height="11"><use href="#eye"/></svg></a></td></tr>
            <tr><td>797</td><td>مهدی مرادیان</td><td>ارسال شده</td><td>1399/01/16</td><td>197,000تومان</td><td><a class="btn"><svg width="11" height="11"><use href="#eye"/></svg></a></td></tr>
            <tr><td>795</td><td>مهدی اسکندری</td><td>ارسال شده</td><td>1399/01/09</td><td>8,000,000تومان</td><td><a class="btn"><svg width="11" height="11"><use href="#eye"/></svg></a></td></tr>
          </table>
        </section>
      </div>
      <footer>تمامی حقوق برای <a>اپن کارت فارسی دات کام</a> محفوظ است. © 1389-1399<br>نسخه 2.0.1.1</footer>
    </main>
  </div>
</div>
<script src="chart.js"></script>
</body>
</html>
```
FILE: chart.js
```js
// Daily sales histogram: one bar per day of the month, two overlaid series.
const x0 = 57.5, y0 = 727, stepX = 37.35, unit = 90.3;
const day = d => x0 + (d - 1) * stepX;
const val = v => y0 - v * unit;
const orders = { 3: 1, 5: 1, 7: 1, 9: 1, 16: 1, 19: 1, 20: 1, 22: 1 };
const customers = { 7: 2, 16: 1, 19: 2, 20: 2 };
let out = '';
for (let d = 2; d <= 31; d++) out += `<path class="grid" d="M${Math.round(day(d)) + .5} 501V727"/>`;
for (let v = .5; v < 2.5; v += .5) out += `<path class="grid" d="M58 ${Math.round(val(v) - .5) + .5}H1216"/>`;
const bars = (data, cls) => {
  for (const d in data) {
    const l = Math.round(day(+d)) + .5, r = Math.round(day(+d + 1)) + .5, t = Math.round(val(data[d]) - .5) + .5;
    out += `<path class="${cls}" d="M${l} 727V${t}H${r}V727"/>`;
  }
};
bars(orders, 'orders');
out += '<path d="M57 500H1217V728H57z" fill="none" stroke="#545454" stroke-width="2"/>';
bars(customers, 'customers');
out += '<path d="M58 726.500H1216" stroke="#4f93dc" stroke-width="1.300"/>';
for (let d = 1; d <= 31; d++) out += `<text x="${day(d) + .3}" y="744" text-anchor="middle">${String(d).padStart(2, '0')}</text>`;
for (let v = 0; v <= 2.5; v += .5) out += `<text x="52.500" y="${val(v) + 3.300}" text-anchor="end">${v.toFixed(1)}</text>`;
out += '<path d="M1150 505h63v37h-63z" fill="#fff" opacity=".85"/>';
[['سفارش ها', '#9fd5f1', 508], ['مشتریان', '#1065d2', 526]].forEach(([name, color, y]) => {
  out += `<rect x="1197.500" y="${y + .5}" width="13" height="13" fill="#fff" stroke="#ccc"/><rect x="1199" y="${y + 2}" width="10" height="10" fill="${color}"/>`;
  out += `<text x="1196.500" y="${y + 10}" text-anchor="end">${name}</text>`;
});
document.querySelector('.chart').innerHTML = out;
```
FILE: styles.css
```css
* { box-sizing: border-box; }
body { margin: 0; height: 1440px; overflow: hidden; display: flex; flex-direction: column; background: #fff; font: 14.67px "Noto Sans", "DejaVu Sans", sans-serif; color: #f0f0f1; }
svg { display: block; flex: none; fill: currentColor; }
.sprite { position: absolute; width: 0; height: 0; }

.gnome, .titlebar { display: grid; grid-template-columns: 1fr auto 1fr; align-items: center; height: 28px; background: #1b2224; flex: none; }
.gnome { font-size: 13.6px; font-weight: 600; color: #e8e8e8; }
.gnome-left { display: flex; align-items: center; gap: 8px; padding-left: 6px; }
.gnome-left svg { margin-left: 9px; }
.gnome-clock { font-size: 13px; word-spacing: -1.5px; }
.tray { display: flex; justify-content: flex-end; align-items: center; padding-right: 14px; }
.cup { margin-left: 22px; margin-top: 4px; }
.screen { margin-left: 20px; }
.vol { margin-left: 11px; }
.power { margin-left: 11px; }
.titlebar b { font-weight: 600; color: #cdd1d1; font-size: 14.4px; }
.winctl { display: flex; justify-content: flex-end; align-items: center; padding-right: 10px; gap: 21px; }
.winctl svg:last-child { margin-left: -4px; }

.tabs { display: grid; grid-template-columns: repeat(12, 210.6px) 1fr; height: 33px; background: #0c0c0d; flex: none; }
.tab { display: flex; align-items: center; padding: 0 9.500px; position: relative; color: #f9f9fa; }
.tab::after { content: ""; position: absolute; right: 0; top: 5px; bottom: 4px; width: 1px; background: #4a4a4c; }
.tab.active { background: #323234; border-top: 2px solid #0a84ff; margin-top: 1px; padding-bottom: 3px; }
.tab.active::after, .tab:nth-child(3)::after { display: none; }
.fav { width: 16px; height: 16px; margin-right: 6px; }
.t { flex: 1; min-width: 0; overflow: hidden; white-space: nowrap; mask-image: linear-gradient(to right, #000 82%, transparent); }
.t.fa { mask-image: none; }
.x { width: 16px; height: 16px; margin-left: 2px; margin-right: 1px; color: #e4e4e5; }
.plus { align-self: center; margin-left: 9px; }

.nav { display: flex; align-items: center; height: 39px; background: #323234; padding: 1px 12px 0 4px; flex: none; }
.back { width: 32px; height: 32px; border-radius: 50%; background: #636366; border: 1px solid #29292b; display: grid; place-items: center; }
.fwd { margin-left: 9px; }
.reload { margin-left: 16px; }
.home { margin-left: 16px; }
.url { width: 1925px; height: 30px; margin-left: 125px; border: 1px solid #5a5a5d; border-radius: 3px; background: #474749; display: flex; align-items: center; padding: 0 6px 0 8px; gap: 12px; }
.url i { width: 1px; height: 22px; background: #66666a; margin: 0 -6px 0 -4px; }
.addr { flex: 1; color: #939395; margin: -1px 0 0 -4px; }
.addr b { font-weight: 400; color: #f9f9fa; }
.ext { display: flex; align-items: center; gap: 16px; margin-left: auto; }
.ext i { width: 1px; height: 34px; background: #55555a; margin: 0 -4px; }
.gift { margin-right: -4px; }

.bookmarks { display: flex; align-items: center; gap: 12.800px; height: 29px; padding: 0 12px 3px; background: #323234; border-bottom: 1px solid #0c0c0d; flex: none; }
.bookmarks span { display: flex; align-items: center; gap: 3.200px; }
.bookmarks svg { width: 16px; height: 16px; color: #c8c8ca; }
.bookmarks i { width: 1px; height: 16px; background: #27272a; margin-right: -1px; }

.page { flex: 1; display: flex; flex-direction: column; font: 11px/18px "DejaVu Sans", sans-serif; color: #666; }
a { color: #1e91cf; }
header { display: flex; height: 45px; border-bottom: 1px solid #e1e1e1; flex: none; }
header .toggle { width: 50px; border-left: 1px solid #e1e1e1; display: grid; place-items: center; color: #666; }
.brand { flex: 1; font-size: 15px; padding: 10px 10px 0; }
.hbtn { width: 48px; border-right: 1px solid #e1e1e1; display: flex; align-items: center; justify-content: center; color: #666; position: relative; }
.out { width: 75px; gap: 4px; font-size: 12px; padding-right: 1px; }
.hbtn em { position: absolute; left: 28px; top: 8px; width: 14px; height: 10px; border-radius: 2px; background: #f56b6b; color: #fff; font: bold 9px/10px "DejaVu Sans", sans-serif; text-align: center; }
.cols { flex: 1; display: flex; }
aside { width: 50px; background: #515151; padding-top: 5px; }
aside a { display: grid; place-items: center; height: 39px; padding-bottom: 2px; border-bottom: 1px solid #5c5c5c; color: #c4c4c4; }
aside a.on { background: #373737; color: #e0e0e0; }
aside svg { width: 16px; height: 16px; }
aside .wide { width: 18px; }
main { flex: 1; padding: 0 20px; }
.crumb { height: 66px; display: flex; align-items: baseline; padding-top: 11px; font-size: 11px; color: #999; }
.crumb h1 { margin: 0 0 0 14px; font: 18.800px/28px "DejaVu Sans", sans-serif; color: #848484; }
.crumb i { font-style: normal; color: #bbb; margin: 0 6px; }
.tiles { display: grid; grid-template-columns: repeat(4, 595px); gap: 30px; }
.tile { background: #279fe0; color: #fff; height: 148px; display: flex; flex-direction: column; }
.th, .tf { height: 28px; line-height: 28px; padding: 1px 8px 0; display: flex; justify-content: space-between; }
.th { background: #1e91cf; }
.tf { background: #3da9e3; }
.pct { color: #8fc8e7; }
.tb { flex: 1; display: flex; justify-content: space-between; padding: 14px 15px; }
.tb svg { color: #68bbe9; }
.tb.usr svg { margin-right: -5px; }
.tb.crt svg { margin-right: -2px; }
.tb b { font: 20px/24px "DejaVu Sans", sans-serif; }
.row { display: grid; gap: 30px; margin-top: 15px; align-items: start; }
.two { grid-template-columns: 1220px 1220px; }
.bottom { grid-template-columns: 803px 1637px; margin-top: 16px; }
.panel { border: 1px solid #e6e6e6; border-top: 2px solid #bfbfbf; box-shadow: 0 1px 1px rgba(0,0,0,.05); }
h3 { margin: 0; height: 44px; border-bottom: 1px solid #e6e6e6; background: #fcfcfc; display: flex; align-items: center; gap: 13px; padding: 0 20px 2px; font: 16px "DejaVu Sans", sans-serif; color: #555; }
.bottom h3 { height: 45px; }
.cal { margin-right: auto; display: flex; align-items: center; gap: 6px; color: #1e91cf; padding-bottom: 1px; }
.caret { margin-top: 3px; }
.map { height: 291px; display: flex; justify-content: center; padding-top: 3px; position: relative; }
.zoom { position: absolute; left: 25px; top: 25px; display: grid; gap: 10px; }
.zoom b { width: 23px; height: 20px; border-radius: 3px; background: #000; color: #fff; font: 10px/20px "DejaVu Sans", sans-serif; text-align: center; }
.land { fill: #9fd5f1; stroke: #9fd5f1; stroke-width: 1.500; }
.sea { fill: #fff; }
.lines { fill: none; stroke: #fff; stroke-width: 2; opacity: .75; }
.chartbox { height: 291px; }
.chart text { font: 9px "DejaVu Sans", sans-serif; fill: #545454; }
.grid { stroke: #545454; stroke-opacity: .25; }
.orders { fill: #9fd5f1; fill-opacity: .4; stroke: #9fd5f1; stroke-width: 1.300; }
.customers { fill: #1065d2; fill-opacity: .4; stroke: #1065d2; stroke-width: 1.300; }
ul { margin: 0; padding: 0; list-style: none; }
li { height: 57px; padding: 11px 15px 0; border-bottom: 1px solid #dcdcdc; }
li:nth-child(even) { height: 58px; }
li:last-child { border: 0; height: 56px; }
small { font-size: 10px; color: #808080; display: flex; align-items: center; gap: 3px; margin-right: -1px; }
li br { display: none; }
table { width: 100%; table-layout: fixed; border-collapse: collapse; }
.c1 { width: 325px; } .c2 { width: 316px; } .c3 { width: 223px; } .c4 { width: 276px; } .c5 { width: 315px; } .c6 { width: 180px; }
th { text-align: right; height: 32px; padding: 1px 8px 0; line-height: 16px; border-bottom: 1px solid #dcdcdc; }
td { height: 52px; padding: 1px 8px 0; border-bottom: 1px solid #dcdcdc; }
tr:nth-child(3) td { height: 53px; }
tr:last-child td { border: 0; }
.btn { width: 40px; height: 35px; border: 1px solid #39b3d7; border-radius: 3px; background: #5bc0de; color: #fff; display: grid; place-items: center; }
footer { text-align: center; margin-top: 58px; }
```
